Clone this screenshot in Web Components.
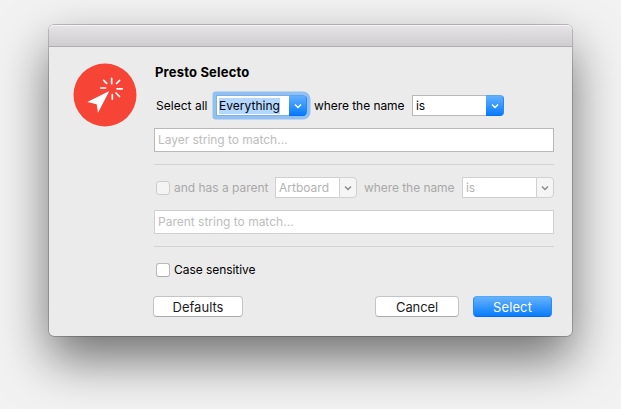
<!DOCTYPE html>
<html lang="en">
<head>
<meta charset="utf-8">
<title>Presto Selecto</title>
<style>
html,body{margin:0;width:621px;height:409px;overflow:hidden;background:#f2f2f2}
body{font-family:Inter,"Liberation Sans",sans-serif;font-size:12px;color:#000}
</style>
</head>
<body>
<presto-page></presto-page>
<script>
const define = (name, html, after) => {
  const t = document.createElement('template');
  t.innerHTML = html;
  customElements.define(name, class extends HTMLElement {
    constructor() {
      super();
      this.attachShadow({ mode: 'open' }).append(t.content.cloneNode(true));
    }
    connectedCallback() { if (after) after(this, this.shadowRoot); }
  });
};

/* One line of text, tracked so that it fills the given width. */
define('fit-text', `
<style>
:host{display:block;white-space:nowrap;line-height:16px;flex:none}
span{display:inline-block}
</style><span><slot></slot></span>`, (el, root) => {
  const w = parseFloat(el.getAttribute('w'));
  const s = root.querySelector('span');
  const n = el.textContent.length;
  s.style.letterSpacing = ((w - s.getBoundingClientRect().width) / n).toFixed(3) + 'px';
  el.style.width = w + 'px';
});

define('app-logo', `
<style>:host{display:block;width:70px;height:70px}svg{display:block}</style>
<svg width="70" height="70" viewBox="0 0 210 210">
<circle cx="105" cy="105" r="94.500" fill="#f64436"/>
<path d="M118 93 84 158 80 132.500 52 126Z" fill="#fff"/>
<path d="M125 55V71M101 61 110 70M149 61 139.500 70.500M92 84H107M141 86.500H157M138 99 148.500 109.500M127 104V118" stroke="#fff" stroke-width="5" stroke-linecap="round" fill="none"/>
</svg>`);

define('combo-box', `
<style>
:host{display:flex;box-sizing:border-box;height:21px;flex:none;border-radius:0 4px 4px 0}
.v{flex:1;box-sizing:border-box;background:#fff;border:1px solid #b8b8b8;border-right:0;padding:2px 0 0 3px;line-height:16px}
.b{width:18px;box-sizing:border-box;border-radius:0 4px 4px 0;background:linear-gradient(#62b0fa,#087bff);border:1px solid;border-color:#56a6f7 #2a85f5 #0870f5 #3b95fa;border-left:0;display:flex;align-items:center;justify-content:center;color:#fff}
:host([focused]){box-shadow:0 0 0 3.500px #92c0f2;border-radius:1px 4px 4px 1px}
:host([focused]) .v{border-color:#7fb0e4;padding-left:2px}
:host([focused]) ::slotted(*){background:#b3d7ff}
:host([off]){color:#b3b3b3}
:host([off]) .v{border-color:#d0d0d0}
:host([off]) .b{background:#f5f5f5;border:1px solid #d0d0d0;color:#8b8b8b}
</style>
<div class="v"><slot></slot></div>
<div class="b"><svg width="8" height="6" viewBox="0 0 8 6"><path d="M1 1.500 4 4.500 7 1.500" fill="none" stroke="currentColor" stroke-width="1.500"/></svg></div>`);

define('text-box', `
<style>
:host{display:block;box-sizing:border-box;height:24px;background:#fff;border:1px solid #b8b8b8;padding:3px 0 0 3px;color:#bdbdbd}
:host([off]){border-color:#d0d0d0}
</style><slot></slot>`);

define('check-box', `
<style>
:host{display:flex;align-items:center;gap:4px;flex:none}
i{width:14px;height:14px;box-sizing:border-box;border:1px solid #b9b9b9;border-bottom-color:#aaa;border-radius:3px;background:#fff}
:host([off]) i{border-color:#cbcbcb;background:#f4f4f4}
:host([off]){color:#a9a9a9}
</style><i></i><slot></slot>`);

define('push-button', `
<style>
:host{display:flex;box-sizing:border-box;height:21px;align-items:center;justify-content:center;border:1px solid #c4c4c4;border-bottom-color:#a9a9a9;border-radius:4px;background:#fff;font-size:13px;color:#1c1c1c}
:host([primary]){background:linear-gradient(#66b2fb,#087cff);border-color:#56a7f8 #2e88f6 #0768f0;color:#fff}
</style><slot></slot>`);

define('rule-line', `<style>:host{display:block;height:1px;background:#d2d2d2}</style>`);

define('dialog-window', `
<style>
:host{display:block;box-sizing:border-box;width:523px;height:311px;border-radius:5px;background:#ebebeb;box-shadow:0 0 0 .7px rgba(0,0,0,.28),0 23px 50px rgba(0,0,0,.54)}
header{box-sizing:border-box;height:22px;border-radius:5px 5px 0 0;background:linear-gradient(#e7e4e7,#d0cdd0);border-bottom:1px solid #afacaf;box-shadow:inset 0 1px #f5f3f5}
main{display:flex;padding:13px 18px 0 21px}
section{flex:1;padding-left:14px}
</style>
<header></header>
<main><slot name="logo"></slot><section><slot></slot></section></main>`);

define('presto-page', `
<style>
:host{display:block;box-sizing:border-box;padding:25px 49px;width:621px;height:409px}
.title{font-weight:700;font-size:13px;margin:4px 0 0 1px}
.row{display:flex;align-items:center;height:21px}
.r1{margin:15px 0 12px;padding-left:2px}
.r2{margin:12px 0;padding-left:2px}
.off{color:#a9a9a9}
.r3{margin:15px 0 18px;padding-left:2px;height:16px}
.r4{margin:0 0 0 -1px}
rule-line{margin-top:12px}
</style>
<dialog-window>
<app-logo slot="logo"></app-logo>
<fit-text class="title" w="94.500">Presto Selecto</fit-text>
<div class="row r1">
<fit-text w="51.500">Select all</fit-text>
<combo-box focused style="width:91px;margin-left:8.500px"><fit-text w="61">Everything</fit-text></combo-box>
<fit-text w="90.500" style="margin-left:7px">where the name</fit-text>
<combo-box style="width:92px;margin-left:7.500px"><fit-text w="9">is</fit-text></combo-box>
</div>
<text-box><fit-text w="129.500">Layer string to match…</fit-text></text-box>
<rule-line></rule-line>
<div class="row r2">
<check-box off><fit-text w="94.500">and has a parent</fit-text></check-box>
<combo-box off style="width:82px;margin-left:6.500px"><fit-text w="50">Artboard</fit-text></combo-box>
<fit-text class="off" w="90.500" style="margin-left:7px">where the name</fit-text>
<combo-box off style="width:92px;margin-left:7.500px"><fit-text w="9">is</fit-text></combo-box>
</div>
<text-box off><fit-text w="135.500">Parent string to match…</fit-text></text-box>
<rule-line></rule-line>
<div class="row r3"><check-box><fit-text w="81.500">Case sensitive</fit-text></check-box></div>
<div class="row r4">
<push-button style="width:90px"><fit-text w="51">Defaults</fit-text></push-button>
<push-button style="width:84px;margin-left:132px"><fit-text w="42">Cancel</fit-text></push-button>
<push-button primary style="width:79px;margin-left:14px"><fit-text w="39">Select</fit-text></push-button>
</div>
</dialog-window>`);
</script>
</body>
</html>
